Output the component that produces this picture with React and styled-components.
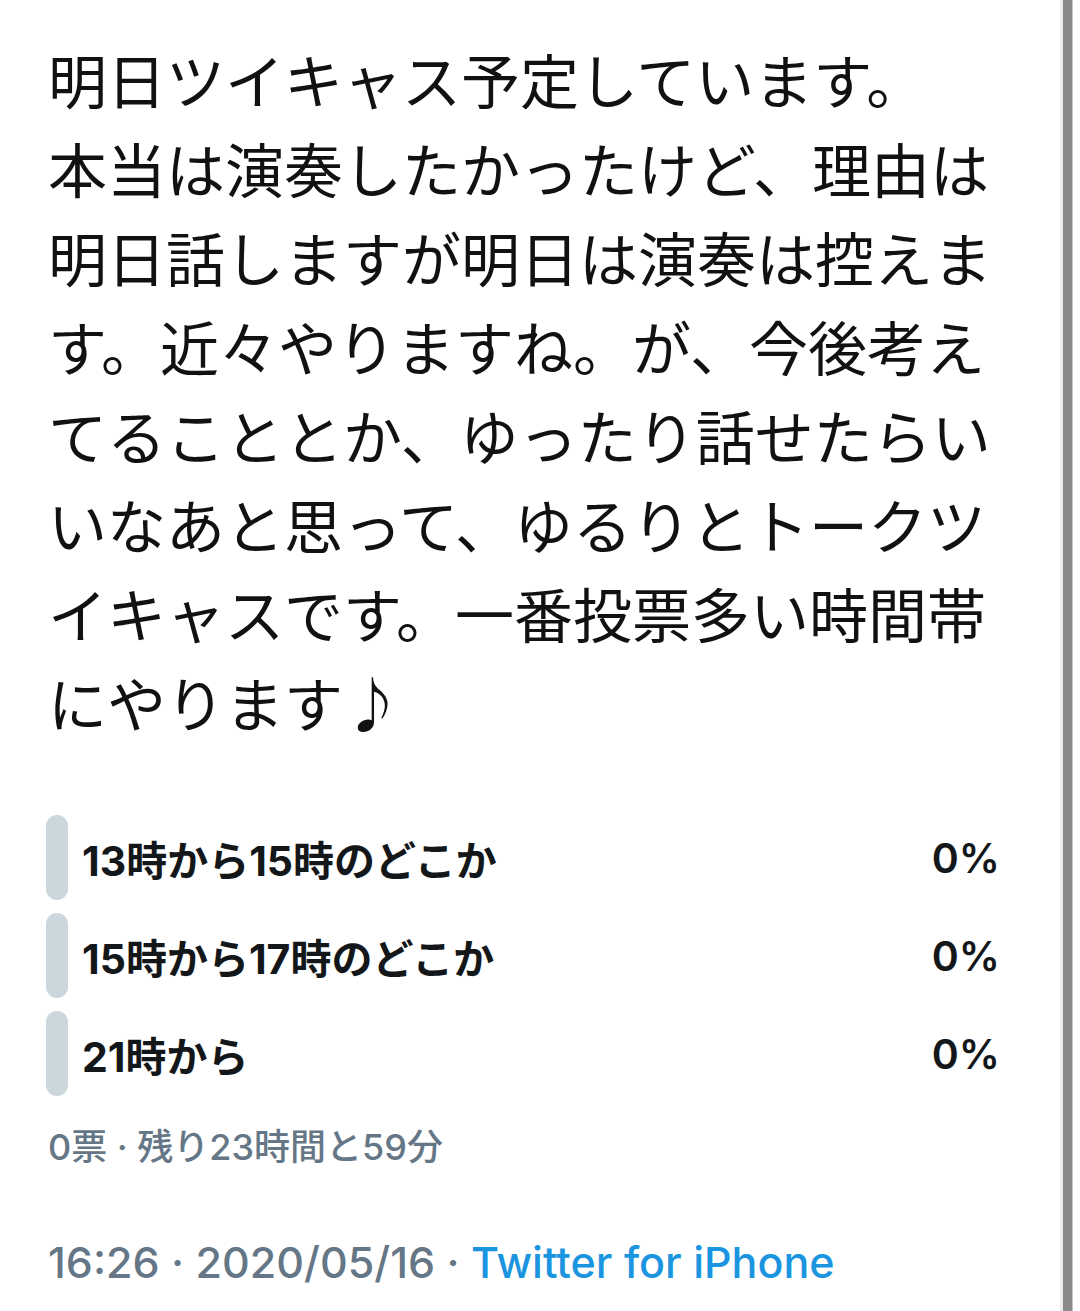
import styled, { createGlobalStyle } from 'styled-components';

const GlobalStyle = createGlobalStyle`
  html, body {
    margin: 0;
    padding: 0;
    background: #fff;
  }
  body {
    font-family: Inter, "Noto Sans CJK JP", sans-serif;
    color: #14171a;
  }
`;

const tweetText = [
  '明日ツイキャス予定しています。',
  '本当は演奏したかったけど、理由は明日話しますが明日は演奏は控えます。近々やりますね。が、今後考えてることとか、ゆったり話せたらいいなあと思って、ゆるりとトークツイキャスです。一番投票多い時間帯にやります♪',
];

const choices = [
  { label: '13時から15時のどこか', percent: 0 },
  { label: '15時から17時のどこか', percent: 0 },
  { label: '21時から', percent: 0 },
];

function App() {
  return (
    <>
      <GlobalStyle />
      <Page>
        <Tweet>
          <Body>
            {tweetText.map((line, i) => (
              <Paragraph key={i}>{line}</Paragraph>
            ))}
          </Body>

          <Poll>
            {choices.map((choice) => (
              <Choice key={choice.label}>
                <Bar style={{ width: `${Math.max(choice.percent, 0)}%` }} />
                <Label>{choice.label}</Label>
                <Percent>{choice.percent}%</Percent>
              </Choice>
            ))}
          </Poll>

          <PollMeta>0票 · 残り23時間と59分</PollMeta>

          <Timestamp>
            16:26 · 2020/05/16 · <Source>Twitter for iPhone</Source>
          </Timestamp>
        </Tweet>
        <Rail />
      </Page>
    </>
  );
}

export default App;

const Page = styled.div`
  display: flex;
  min-height: 1311px;
  background: #fff;
`;

const Tweet = styled.main`
  flex: 0 0 1062px;
  box-sizing: border-box;
  padding: 34px 62px 0 48px;
  display: flex;
  flex-direction: column;
`;

const Body = styled.div`
  font-family: "Noto Sans CJK JP", sans-serif;
  font-size: 59px;
  line-height: 89px;
  color: #111;
  word-break: break-all;
`;

const Paragraph = styled.p`
  margin: 0;
`;

const Poll = styled.div`
  margin: 69px 0 0 -2px;
  display: flex;
  flex-direction: column;
  gap: 13px;
`;

const Choice = styled.div`
  position: relative;
  display: flex;
  align-items: center;
  height: 85px;
  padding-left: 36px;
  font-size: 41px;
  font-weight: 700;
  color: #14171a;
  &::before {
    content: '';
    position: absolute;
    left: 0;
    top: 0;
    width: 22px;
    height: 100%;
    border-radius: 11px;
    background: #ccd6dd;
  }
`;

const Bar = styled.span`
  position: absolute;
  left: 0;
  top: 0;
  height: 100%;
  border-radius: 11px;
  background: #1da1f2;
`;

const Label = styled.span`
  position: relative;
  flex: 1;
`;

const Percent = styled.span`
  position: relative;
  font-weight: 600;
`;

const PollMeta = styled.div`
  margin-top: 22px;
  font-size: 36px;
  font-weight: 500;
  color: #657786;
`;

const Timestamp = styled.div`
  margin-top: 66px;
  font-size: 43px;
  font-weight: 500;
  color: #657786;
`;

const Source = styled.span`
  color: #1b95e0;
`;

const Rail = styled.div`
  width: 9px;
  margin-left: 1px;
  background: #8a8a8a;
  box-shadow: -3px 0 0 #ececec, 1px 0 0 #c4c4c4;
`;
